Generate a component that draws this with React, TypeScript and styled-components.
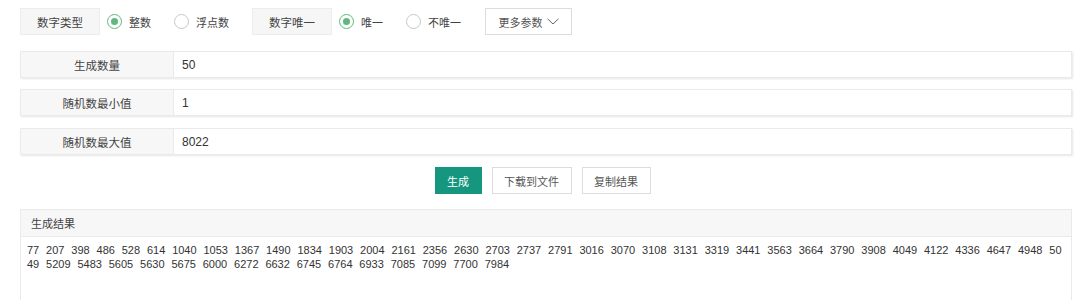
import styled, { createGlobalStyle } from "styled-components";

const GlobalStyle = createGlobalStyle`
  html, body {
    margin: 0;
    padding: 0;
    background: #fff;
  }
  body {
    font-family: "Liberation Sans", "Noto Sans CJK SC", Arial, sans-serif;
    font-size: 11px;
    color: #444;
  }
`;

const Page = styled.div`
  padding: 8px 8px 0 20px;
`;

const Toolbar = styled.div`
  display: flex;
  align-items: center;
  height: 27px;
`;

const OptionLabel = styled.div`
  width: 80px;
  height: 27px;
  box-sizing: border-box;
  border: 1px solid #ececec;
  background: #f6f6f6;
  display: flex;
  align-items: center;
  justify-content: center;
  font-size: 11.5px;
  margin-right: 7px;
`;

const RadioItem = styled.label`
  display: flex;
  align-items: center;
  margin-right: 23px;
  cursor: pointer;
`;

const RadioCircle = styled.span<{ $checked?: boolean }>`
  width: 15px;
  height: 15px;
  box-sizing: border-box;
  border-radius: 50%;
  border: 1px solid ${(p) => (p.$checked ? "#5fb97c" : "#c8c8c8")};
  background: #fff;
  display: flex;
  align-items: center;
  justify-content: center;
  margin-right: 7px;
  &::after {
    content: "";
    display: ${(p) => (p.$checked ? "block" : "none")};
    width: 7px;
    height: 7px;
    border-radius: 50%;
    background: #5fb97c;
  }
`;

const MoreButton = styled.button`
  height: 27px;
  width: 87px;
  box-sizing: border-box;
  border: 1px solid #dcdcdc;
  background: #fff;
  color: #555;
  font: inherit;
  display: flex;
  align-items: center;
  justify-content: center;
  gap: 4px;
  padding: 0;
  margin-left: 1px;
`;

const FieldRow = styled.div<{ $top: number }>`
  display: flex;
  height: 27px;
  box-sizing: border-box;
  border: 1px solid #eaeaea;
  box-shadow: 1px 1px 2px rgba(0, 0, 0, 0.1);
  margin-top: ${(p) => p.$top}px;
`;

const FieldLabel = styled.div`
  width: 152px;
  flex-shrink: 0;
  background: #f7f7f7;
  border-right: 1px solid #eaeaea;
  display: flex;
  align-items: center;
  justify-content: center;
  font-size: 11.5px;
`;

const FieldValue = styled.div`
  flex: 1;
  display: flex;
  align-items: center;
  padding-left: 8px;
  font-size: 12px;
  color: #333;
`;

const Actions = styled.div`
  display: flex;
  justify-content: center;
  margin-top: 12px;
  padding-left: 3px;
`;

const ActionButton = styled.button<{ $primary?: boolean; $w: number }>`
  width: ${(p) => p.$w}px;
  height: 27px;
  box-sizing: border-box;
  margin-right: 10px;
  padding: 0;
  font: inherit;
  border: 1px solid ${(p) => (p.$primary ? "#15967f" : "#dcdcdc")};
  background: ${(p) => (p.$primary ? "#15967f" : "#fff")};
  color: ${(p) => (p.$primary ? "#fff" : "#555")};
`;

const ResultPanel = styled.div`
  margin-top: 15px;
  border: 1px solid #eaeaea;
  height: 120px;
`;

const ResultHeader = styled.div`
  height: 26px;
  background: #f7f7f7;
  border-bottom: 1px solid #eaeaea;
  display: flex;
  align-items: center;
  padding-left: 10px;
`;

const ResultText = styled.div`
  padding: 6px 6px;
  font-family: "Liberation Sans", Arial, sans-serif;
  font-size: 11px;
  color: #333;
  line-height: 14px;
  word-break: break-all;
  word-spacing: 3.8px;
`;

const numbers = [
  77, 207, 398, 486, 528, 614, 1040, 1053, 1367, 1490, 1834, 1903, 2004, 2161,
  2356, 2630, 2703, 2737, 2791, 3016, 3070, 3108, 3131, 3319, 3441, 3563, 3664,
  3790, 3908, 4049, 4122, 4336, 4647, 4948, 5049, 5209, 5483, 5605, 5630, 5675,
  6000, 6272, 6632, 6745, 6764, 6933, 7085, 7099, 7700, 7984,
];

const Chevron = () => (
  <svg width="12" height="7" viewBox="0 0 12 7">
    <path d="M0.5 0.8 L6 6 L11.5 0.8" fill="none" stroke="#666" strokeWidth="1" />
  </svg>
);

const App = () => {
  return (
    <Page>
      <GlobalStyle />
      <Toolbar>
        <OptionLabel>数字类型</OptionLabel>
        <RadioItem>
          <RadioCircle $checked />
          整数
        </RadioItem>
        <RadioItem>
          <RadioCircle />
          浮点数
        </RadioItem>
        <OptionLabel>数字唯一</OptionLabel>
        <RadioItem>
          <RadioCircle $checked />
          唯一
        </RadioItem>
        <RadioItem>
          <RadioCircle />
          不唯一
        </RadioItem>
        <MoreButton>
          更多参数 <Chevron />
        </MoreButton>
      </Toolbar>

      <FieldRow $top={16}>
        <FieldLabel>生成数量</FieldLabel>
        <FieldValue>50</FieldValue>
      </FieldRow>
      <FieldRow $top={11}>
        <FieldLabel>随机数最小值</FieldLabel>
        <FieldValue>1</FieldValue>
      </FieldRow>
      <FieldRow $top={12}>
        <FieldLabel>随机数最大值</FieldLabel>
        <FieldValue>8022</FieldValue>
      </FieldRow>

      <Actions>
        <ActionButton $primary $w={47}>生成</ActionButton>
        <ActionButton $w={80}>下载到文件</ActionButton>
        <ActionButton $w={69}>复制结果</ActionButton>
      </Actions>

      <ResultPanel>
        <ResultHeader>生成结果</ResultHeader>
        <ResultText>{numbers.join(" ")}</ResultText>
      </ResultPanel>
    </Page>
  );
};

export default App;
